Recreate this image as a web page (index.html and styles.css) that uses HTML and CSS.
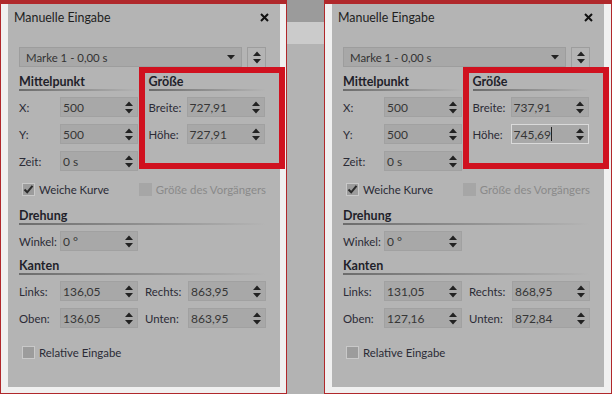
FILE: index.html
```html
<!DOCTYPE html>
<html lang="de">
<head>
    <meta charset="UTF-8">
    <title>Manuelle Eingabe</title>
    <link rel="stylesheet" href="styles.css">
</head>
<body>
    <div class="shot">
        <div class="panel">
            <div class="titlebar">
                <span class="title">Manuelle Eingabe</span>
                <svg class="close" width="9" height="9" viewBox="0 0 9 9"><path d="M1 1L8 8M8 1L1 8" stroke="#111" stroke-width="2"/></svg>
            </div>
            <div class="marke-row">
                <div class="select"><span>Marke 1 - 0,00 s</span><svg width="8" height="5" viewBox="0 0 8 5"><path d="M0 0H8L4 4.5Z" fill="#222"/></svg></div>
                <div class="spinbtn"><svg width="8" height="13" viewBox="0 0 8 13"><path d="M0 5L4 0.5L8 5ZM0 8H8L4 12.5Z" fill="#222"/></svg></div>
            </div>
            <div class="cols top">
                <div class="col first">
                    <div class="heading">Mittelpunkt</div>
                    <div class="field"><span class="label">X:</span><div class="input"><span>500</span><svg class="spin" width="8" height="13" viewBox="0 0 8 13"><path d="M0 5L4 0.5L8 5ZM0 8H8L4 12.5Z" fill="#222"/></svg></div></div>
                    <div class="field"><span class="label">Y:</span><div class="input"><span>500</span><svg class="spin" width="8" height="13" viewBox="0 0 8 13"><path d="M0 5L4 0.5L8 5ZM0 8H8L4 12.5Z" fill="#222"/></svg></div></div>
                    <div class="field"><span class="label">Zeit:</span><div class="input"><span>0 s</span><svg class="spin" width="8" height="13" viewBox="0 0 8 13"><path d="M0 5L4 0.5L8 5ZM0 8H8L4 12.5Z" fill="#222"/></svg></div></div>
                </div>
                <div class="col size">
                    <div class="heading">Größe</div>
                    <div class="field"><span class="label">Breite:</span><div class="input"><span>727,91</span><svg class="spin" width="8" height="13" viewBox="0 0 8 13"><path d="M0 5L4 0.5L8 5ZM0 8H8L4 12.5Z" fill="#222"/></svg></div></div>
                    <div class="field"><span class="label">Höhe:</span><div class="input"><span>727,91</span><svg class="spin" width="8" height="13" viewBox="0 0 8 13"><path d="M0 5L4 0.5L8 5ZM0 8H8L4 12.5Z" fill="#222"/></svg></div></div>
                </div>
            </div>
            <div class="checks">
                <div class="check"><span class="box"><svg width="11" height="11" viewBox="0 0 11 11"><path d="M1.5 5.5L4.2 8.3L9.5 1.8" fill="none" stroke="#2a2a2a" stroke-width="2"/></svg></span>Weiche Kurve</div>
                <div class="check disabled"><span class="box"></span>Größe des Vorgängers</div>
            </div>
            <div class="heading wide">Drehung</div>
            <div class="field single"><span class="label">Winkel:</span><div class="input"><span>0 °</span><svg class="spin" width="8" height="13" viewBox="0 0 8 13"><path d="M0 5L4 0.5L8 5ZM0 8H8L4 12.5Z" fill="#222"/></svg></div></div>
            <div class="heading wide">Kanten</div>
            <div class="cols edges">
                <div class="col first">
                    <div class="field"><span class="label">Links:</span><div class="input"><span>136,05</span><svg class="spin" width="8" height="13" viewBox="0 0 8 13"><path d="M0 5L4 0.5L8 5ZM0 8H8L4 12.5Z" fill="#222"/></svg></div></div>
                    <div class="field"><span class="label">Oben:</span><div class="input"><span>136,05</span><svg class="spin" width="8" height="13" viewBox="0 0 8 13"><path d="M0 5L4 0.5L8 5ZM0 8H8L4 12.5Z" fill="#222"/></svg></div></div>
                </div>
                <div class="col second">
                    <div class="field"><span class="label">Rechts:</span><div class="input"><span>863,95</span><svg class="spin" width="8" height="13" viewBox="0 0 8 13"><path d="M0 5L4 0.5L8 5ZM0 8H8L4 12.5Z" fill="#222"/></svg></div></div>
                    <div class="field"><span class="label">Unten:</span><div class="input"><span>863,95</span><svg class="spin" width="8" height="13" viewBox="0 0 8 13"><path d="M0 5L4 0.5L8 5ZM0 8H8L4 12.5Z" fill="#222"/></svg></div></div>
                </div>
            </div>
            <div class="check relative"><span class="box"></span>Relative Eingabe</div>
        </div>
        <div class="mark"></div>
    </div>

    <div class="divider"></div>

    <div class="shot">
        <div class="panel">
            <div class="titlebar">
                <span class="title">Manuelle Eingabe</span>
                <svg class="close" width="9" height="9" viewBox="0 0 9 9"><path d="M1 1L8 8M8 1L1 8" stroke="#111" stroke-width="2"/></svg>
            </div>
            <div class="marke-row">
                <div class="select"><span>Marke 1 - 0,00 s</span><svg width="8" height="5" viewBox="0 0 8 5"><path d="M0 0H8L4 4.5Z" fill="#222"/></svg></div>
                <div class="spinbtn"><svg width="8" height="13" viewBox="0 0 8 13"><path d="M0 5L4 0.5L8 5ZM0 8H8L4 12.5Z" fill="#222"/></svg></div>
            </div>
            <div class="cols top">
                <div class="col first">
                    <div class="heading">Mittelpunkt</div>
                    <div class="field"><span class="label">X:</span><div class="input"><span>500</span><svg class="spin" width="8" height="13" viewBox="0 0 8 13"><path d="M0 5L4 0.5L8 5ZM0 8H8L4 12.5Z" fill="#222"/></svg></div></div>
                    <div class="field"><span class="label">Y:</span><div class="input"><span>500</span><svg class="spin" width="8" height="13" viewBox="0 0 8 13"><path d="M0 5L4 0.5L8 5ZM0 8H8L4 12.5Z" fill="#222"/></svg></div></div>
                    <div class="field"><span class="label">Zeit:</span><div class="input"><span>0 s</span><svg class="spin" width="8" height="13" viewBox="0 0 8 13"><path d="M0 5L4 0.5L8 5ZM0 8H8L4 12.5Z" fill="#222"/></svg></div></div>
                </div>
                <div class="col size">
                    <div class="heading">Größe</div>
                    <div class="field"><span class="label">Breite:</span><div class="input"><span>737,91</span><svg class="spin" width="8" height="13" viewBox="0 0 8 13"><path d="M0 5L4 0.5L8 5ZM0 8H8L4 12.5Z" fill="#222"/></svg></div></div>
                    <div class="field"><span class="label">Höhe:</span><div class="input focus"><span>745,69</span><i class="caret"></i><svg class="spin" width="8" height="13" viewBox="0 0 8 13"><path d="M0 5L4 0.5L8 5ZM0 8H8L4 12.5Z" fill="#222"/></svg></div></div>
                </div>
            </div>
            <div class="checks">
                <div class="check"><span class="box"><svg width="11" height="11" viewBox="0 0 11 11"><path d="M1.5 5.5L4.2 8.3L9.5 1.8" fill="none" stroke="#2a2a2a" stroke-width="2"/></svg></span>Weiche Kurve</div>
                <div class="check disabled"><span class="box"></span>Größe des Vorgängers</div>
            </div>
            <div class="heading wide">Drehung</div>
            <div class="field single"><span class="label">Winkel:</span><div class="input"><span>0 °</span><svg class="spin" width="8" height="13" viewBox="0 0 8 13"><path d="M0 5L4 0.5L8 5ZM0 8H8L4 12.5Z" fill="#222"/></svg></div></div>
            <div class="heading wide">Kanten</div>
            <div class="cols edges">
                <div class="col first">
                    <div class="field"><span class="label">Links:</span><div class="input"><span>131,05</span><svg class="spin" width="8" height="13" viewBox="0 0 8 13"><path d="M0 5L4 0.5L8 5ZM0 8H8L4 12.5Z" fill="#222"/></svg></div></div>
                    <div class="field"><span class="label">Oben:</span><div class="input"><span>127,16</span><svg class="spin" width="8" height="13" viewBox="0 0 8 13"><path d="M0 5L4 0.5L8 5ZM0 8H8L4 12.5Z" fill="#222"/></svg></div></div>
                </div>
                <div class="col second">
                    <div class="field"><span class="label">Rechts:</span><div class="input"><span>868,95</span><svg class="spin" width="8" height="13" viewBox="0 0 8 13"><path d="M0 5L4 0.5L8 5ZM0 8H8L4 12.5Z" fill="#222"/></svg></div></div>
                    <div class="field"><span class="label">Unten:</span><div class="input"><span>872,84</span><svg class="spin" width="8" height="13" viewBox="0 0 8 13"><path d="M0 5L4 0.5L8 5ZM0 8H8L4 12.5Z" fill="#222"/></svg></div></div>
                </div>
            </div>
            <div class="check relative"><span class="box"></span>Relative Eingabe</div>
        </div>
        <div class="mark"></div>
    </div>
</body>
</html>
```

FILE: styles.css
```css
body {
    margin: 0;
    width: 612px;
    height: 394px;
    display: flex;
    overflow: hidden;
    font-family: 'Lato', 'Noto Sans', sans-serif;
    font-size: 11.4px;
    color: #2b2b36;
    background-color: #f0f0f0;
}
.shot {
    position: relative;
    flex: 0 0 287px;
    min-width: 0;
    height: 394px;
    box-sizing: border-box;
    border: 1px solid #b0282b;
    border-top-width: 4px;
    padding: 0 6px 6px 7px;
    background-color: #f0f0f0;
}
.shot:last-child {
    flex-basis: 288px;
    padding-right: 7px;
}
.divider {
    flex: 0 0 37px;
    background: linear-gradient(#9b9b9b 0, #9b9b9b 22px, #cbcbcb 22px, #cbcbcb 44px, #b3b3b3 44px);
}
.panel {
    height: 100%;
    box-sizing: border-box;
    background-color: #b4b4b4;
    padding: 0 14px 0 11px;
    display: flex;
    flex-direction: column;
    white-space: nowrap;
    overflow: hidden;
}
.titlebar {
    height: 26px;
    margin-left: -5px;
    margin-right: -3px;
    display: flex;
    align-items: center;
    justify-content: space-between;
}
.title {
    font-size: 12.4px;
    color: #1e1e1e;
}
.marke-row {
    margin-top: 17px;
    display: flex;
    gap: 5px;
    height: 21px;
}
.select {
    width: 226px;
    height: 20px;
    box-sizing: border-box;
    background-color: #a8a8a8;
    border: 1px solid #9d9d9d;
    display: flex;
    align-items: center;
    justify-content: space-between;
    padding: 0 6px 0 6px;
    color: #333;
}
.spinbtn {
    width: 19px;
    height: 21px;
    box-sizing: border-box;
    border: 1px solid #9d9d9d;
    display: flex;
    align-items: center;
    justify-content: center;
}
.cols {
    display: flex;
}
.top {
    margin-top: 7px;
    gap: 10px;
}
.col {
    display: flex;
    flex-direction: column;
    gap: 7px;
}
.col.first {
    width: 120px;
}
.col.size {
    width: 118px;
}
.top .heading {
    margin-bottom: -1px;
}
.heading {
    position: relative;
    height: 16px;
    line-height: 14px;
    font-weight: bold;
    font-size: 12.5px;
    color: #1f1f2a;
}
.heading::after {
    content: "";
    position: absolute;
    left: 0;
    right: 0;
    bottom: 0;
    height: 2px;
    background: linear-gradient(to right, #6c6c6c, #b4b4b4);
}
.field {
    display: flex;
    align-items: center;
    height: 20px;
}
.label {
    width: 41px;
}
.size .label {
    width: 38px;
}
.second .label {
    width: 43px;
}
.input {
    width: 78px;
    height: 20px;
    box-sizing: border-box;
    background-color: #a8a8a8;
    border: 1px solid #a1a1a1;
    display: flex;
    align-items: center;
    padding: 0 4px 0 2px;
    color: #363636;
    font-size: 12px;
}
.input span {
    flex: 1;
}
.input.focus {
    border-color: #dadada;
}
.input.focus span {
    flex: none;
}
.caret {
    width: 1px;
    height: 14px;
    background-color: #222;
    margin-right: auto;
}
.spin {
    flex: none;
}
.checks {
    margin-top: 12px;
    display: flex;
    margin-left: 3px;
}
.check {
    display: flex;
    align-items: center;
    height: 13px;
    gap: 4px;
}
.checks .check:first-child {
    width: 117px;
}
.box {
    width: 13px;
    height: 13px;
    box-sizing: border-box;
    background-color: #9c9c9c;
    border: 1px solid #c9c9c9;
    display: flex;
    align-items: center;
    justify-content: center;
}
.disabled {
    color: #8a8a8a;
}
.disabled .box {
    background-color: #a6a6a6;
    border-color: #a6a6a6;
}
.heading.wide {
    margin-top: 13px;
}
.single {
    margin-top: 6px;
}
.heading.wide + .cols {
    margin-top: 6px;
}
.single + .heading.wide {
    margin-top: 8px;
}
.edges .col.first {
    width: 127px;
}
.relative {
    margin-top: 18px;
    margin-left: 3px;
}
.mark {
    position: absolute;
    left: 138px;
    top: 63px;
    width: 146px;
    height: 102px;
    box-sizing: border-box;
    border: 6px solid #d0111f;
}
```
